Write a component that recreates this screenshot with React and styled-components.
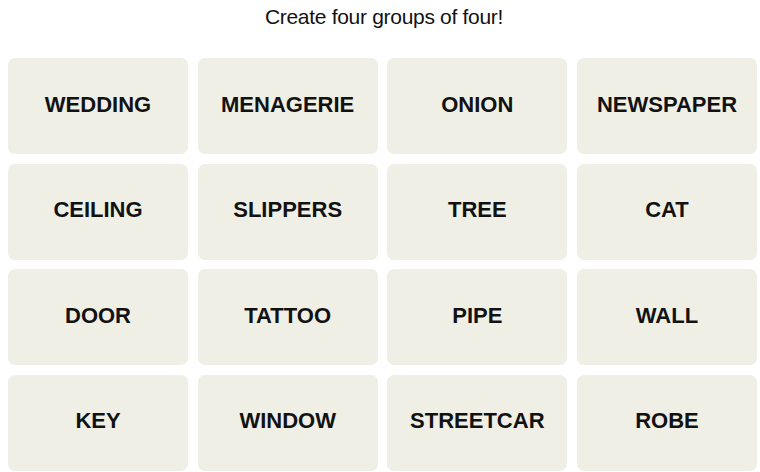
import React from "react";
import styled, { createGlobalStyle } from "styled-components";

const GlobalStyle = createGlobalStyle`
  html, body {
    margin: 0;
    padding: 0;
    background: #fff;
  }
  body {
    font-family: "Liberation Sans", Arial, sans-serif;
    color: #121212;
  }
`;

const Page = styled.main`
  width: 760px;
  padding: 0 0 0 8px;
  box-sizing: border-box;
`;

const Prompt = styled.p`
  margin: 0;
  padding-top: 5px;
  height: 58px;
  box-sizing: border-box;
  text-align: center;
  font-size: 21px;
  line-height: 24px;
  font-weight: 400;
  letter-spacing: -0.3px;
  color: #121212;
`;

const Board = styled.div`
  display: grid;
  grid-template-columns: repeat(4, 180px);
  grid-auto-rows: 96px;
  gap: 9.67px;
`;

const Tile = styled.button`
  border: none;
  margin: 0;
  padding: 0 0 3px;
  border-radius: 7px;
  background: ${(p) => (p.$selected ? "#5a594e" : "#efefe6")};
  color: ${(p) => (p.$selected ? "#fff" : "#121212")};
  font-family: "Liberation Sans", Arial, sans-serif;
  font-weight: 700;
  font-size: 22px;
  text-transform: uppercase;
  display: flex;
  align-items: center;
  justify-content: center;
  cursor: pointer;
`;

const words = [
  "Wedding", "Menagerie", "Onion", "Newspaper",
  "Ceiling", "Slippers", "Tree", "Cat",
  "Door", "Tattoo", "Pipe", "Wall",
  "Key", "Window", "Streetcar", "Robe",
];

export default function App() {
  return (
    <Page>
      <GlobalStyle />
      <Prompt>Create four groups of four!</Prompt>
      <Board>
        {words.map((w) => (
          <Tile key={w}>{w}</Tile>
        ))}
      </Board>
    </Page>
  );
}
